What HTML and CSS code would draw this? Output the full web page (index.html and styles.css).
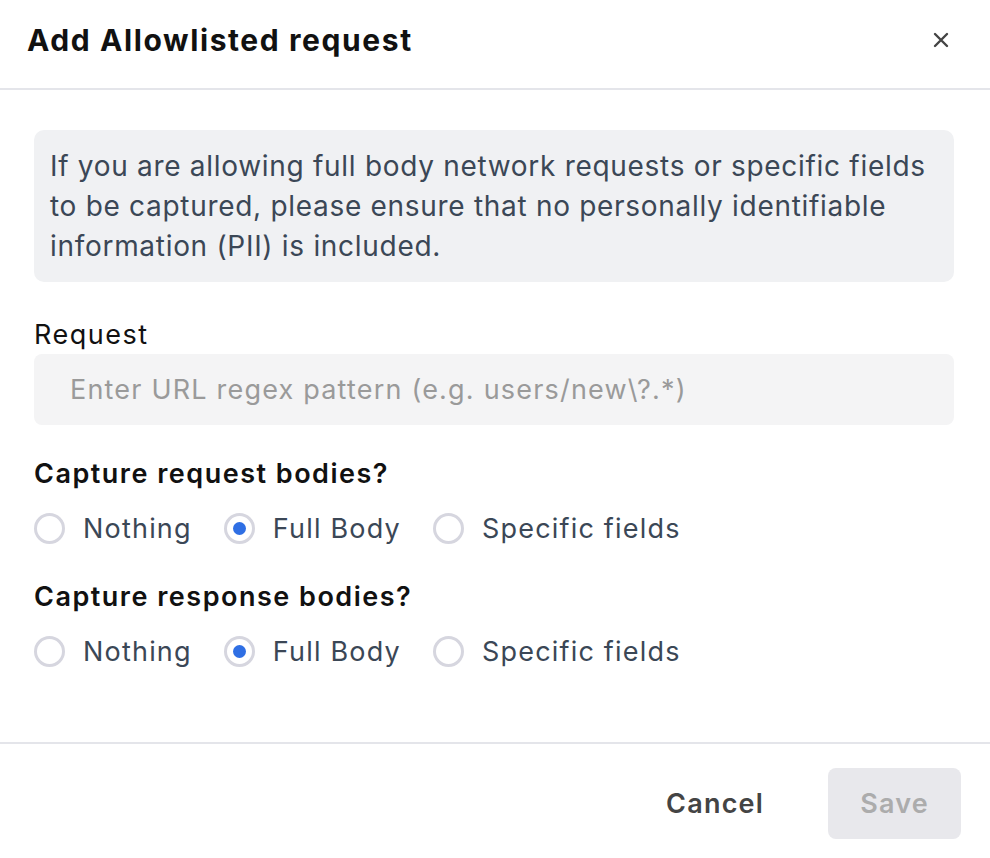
FILE: index.html
```html
<!DOCTYPE html>
<html lang="en">
<head>
  <meta charset="UTF-8" />
  <title>Add Allowlisted request</title>
  <link rel="stylesheet" href="styles.css">
</head>
<body>

  <div class="modal">
    <div class="modal-header">
      <h1>Add Allowlisted request</h1>
      <button class="close" aria-label="Close">
        <svg width="16" height="16" viewBox="0 0 16 16">
          <path d="M2 2 L14 14 M14 2 L2 14" stroke="#444" stroke-width="2.4" stroke-linecap="round" />
        </svg>
      </button>
    </div>

    <div class="modal-body">
      <div class="notice">
        If you are allowing full body network requests or specific fields to be captured, please ensure that no personally identifiable information (PII) is included.
      </div>

      <label class="field-label" for="request">Request</label>
      <input type="text" id="request" placeholder="Enter URL regex pattern (e.g. users/new\?.*)" />

      <h3>Capture request bodies?</h3>
      <div class="radio-row">
        <label class="radio"><span class="dot"></span>Nothing</label>
        <label class="radio checked"><span class="dot"></span>Full Body</label>
        <label class="radio"><span class="dot"></span>Specific fields</label>
      </div>

      <h3>Capture response bodies?</h3>
      <div class="radio-row">
        <label class="radio"><span class="dot"></span>Nothing</label>
        <label class="radio checked"><span class="dot"></span>Full Body</label>
        <label class="radio"><span class="dot"></span>Specific fields</label>
      </div>
    </div>

    <div class="modal-footer">
      <button class="cancel">Cancel</button>
      <button class="save" disabled>Save</button>
    </div>
  </div>

</body>
</html>
```

FILE: styles.css
```css
body {
  margin: 0;
  background: white;
  font-family: Inter, "Noto Sans", sans-serif;
  color: #111;
}

.modal {
  width: 990px;
}

.modal-header {
  box-sizing: border-box;
  height: 90px;
  display: flex;
  align-items: center;
  justify-content: space-between;
  padding: 0 41px 8px 27px;
  border-bottom: 2px solid #e4e5ea;
}

.modal-header h1 {
  margin: 0;
  font-size: 30px;
  font-weight: 700;
  letter-spacing: 1.6px;
  color: #111;
}

.close {
  background: none;
  border: none;
  padding: 0;
  display: flex;
  cursor: pointer;
}

.modal-body {
  padding: 40px 36px 71px 34px;
}

.notice {
  background: #f0f1f3;
  border-radius: 10px;
  padding: 16px 16px;
  font-size: 28px;
  line-height: 40px;
  letter-spacing: 0.7px;
  color: #3b4756;
}

.field-label {
  display: block;
  margin-top: 35px;
  font-size: 27px;
  line-height: 36px;
  letter-spacing: 1.5px;
  color: #111;
}

input[type="text"] {
  display: block;
  box-sizing: border-box;
  width: 100%;
  height: 71px;
  margin-top: 1px;
  border: none;
  border-radius: 8px;
  background: #f4f4f5;
  padding: 0 36px;
  font-family: inherit;
  font-size: 27px;
  letter-spacing: 1.2px;
  color: #111;
}

input::placeholder {
  color: #9a9a9a;
}

h3 {
  margin: 31px 0 0;
  font-size: 27px;
  line-height: 36px;
  font-weight: 600;
  letter-spacing: 1.5px;
  color: #111;
}

.radio-row {
  display: flex;
  gap: 32px;
  margin-top: 16px;
  height: 40px;
  align-items: center;
}

.radio {
  display: flex;
  align-items: center;
  gap: 18px;
  font-size: 27px;
  letter-spacing: 1.2px;
  color: #3b4756;
}

.dot {
  box-sizing: border-box;
  width: 31px;
  height: 31px;
  border: 3px solid #d6d6df;
  border-radius: 50%;
  display: flex;
  align-items: center;
  justify-content: center;
}

.radio.checked .dot::after {
  content: "";
  width: 13px;
  height: 13px;
  border-radius: 50%;
  background: #2f6fe4;
}

.modal-footer {
  border-top: 2px solid #e4e5ea;
  display: flex;
  justify-content: flex-end;
  align-items: center;
  gap: 32px;
  padding: 24px 29px 19px;
}

.modal-footer button {
  font-family: inherit;
  font-size: 27px;
  font-weight: 600;
  letter-spacing: 1.2px;
  border: none;
  border-radius: 8px;
  height: 71px;
}

.cancel {
  background: none;
  color: #444;
  padding: 0 32px;
  cursor: pointer;
}

.save {
  width: 133px;
  background: #e8e8ec;
  color: #acacac;
}
```
